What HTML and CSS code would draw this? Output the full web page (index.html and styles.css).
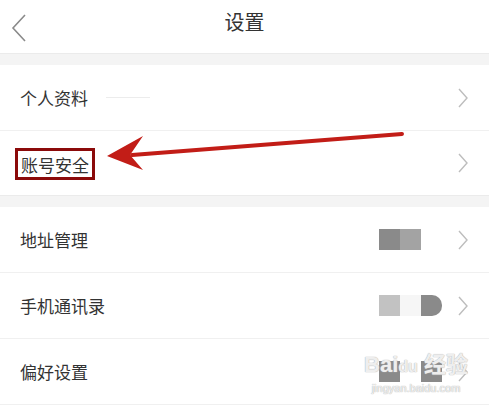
FILE: index.html
```html
<!DOCTYPE html>
<html lang="zh-CN">
<head>
    <meta charset="UTF-8">
    <meta name="viewport" content="width=device-width, initial-scale=1.0">
    <title>设置</title>
    <link rel="stylesheet" href="styles.css">
</head>
<body>

    <div class="page">
        <div class="header">
            <div class="back">
                <svg width="16" height="28" viewBox="0 0 16 28"><polyline points="14,1 2,14 14,27" fill="none" stroke="#8a8a8a" stroke-width="1.6"/></svg>
            </div>
            <div class="title">设置</div>
            <div></div>
        </div>

        <div class="gap"></div>
        <div class="section">
            <div class="row">
                <span class="label">个人资料</span>
                <span class="faint-line"></span>
                <svg class="chev" width="10" height="20" viewBox="0 0 10 20"><polyline points="1,1 9,10 1,19" fill="none" stroke="#bdbdbd" stroke-width="1.4"/></svg>
            </div>
            <div class="row short">
                <span class="label boxed">账号安全</span>
                <svg class="chev" width="10" height="20" viewBox="0 0 10 20"><polyline points="1,1 9,10 1,19" fill="none" stroke="#bdbdbd" stroke-width="1.4"/></svg>
            </div>
        </div>

        <div class="gap"></div>
        <div class="section">
            <div class="row">
                <span class="label">地址管理</span>
                <span class="blocks">
                    <i class="b dark"></i><i class="b mid"></i>
                </span>
                <svg class="chev" width="10" height="20" viewBox="0 0 10 20"><polyline points="1,1 9,10 1,19" fill="none" stroke="#bdbdbd" stroke-width="1.4"/></svg>
            </div>
            <div class="row">
                <span class="label">手机通讯录</span>
                <span class="blocks">
                    <i class="b light"></i><i class="b pale"></i><i class="b dark round"></i>
                </span>
                <svg class="chev" width="10" height="20" viewBox="0 0 10 20"><polyline points="1,1 9,10 1,19" fill="none" stroke="#bdbdbd" stroke-width="1.4"/></svg>
            </div>
            <div class="row last">
                <span class="label">偏好设置</span>
                <span class="blocks">
                    <i class="b dark"></i><i class="b blank"></i><i class="b dark"></i>
                </span>
                <svg class="chev" width="10" height="20" viewBox="0 0 10 20"><polyline points="1,1 9,10 1,19" fill="none" stroke="#bdbdbd" stroke-width="1.4"/></svg>
            </div>
        </div>

        <!-- 红色箭头标注 -->
        <svg class="arrow" width="489" height="409" viewBox="0 0 489 409">
            <line x1="402" y1="134" x2="132" y2="155" stroke="#c21d17" stroke-width="4" stroke-linecap="round"/>
            <polygon points="107,156 143,136 130,155 143,170" fill="#c21d17"/>
        </svg>

        <div class="watermark">
            <div class="wm-logo">Bai<span>du</span> 经验</div>
            <div class="wm-url">jingyan.baidu.com</div>
        </div>
    </div>

</body>
</html>
```

FILE: styles.css
```css
body {
    margin: 0;
    background-color: #fff;
    font-family: "Noto Sans CJK SC", "Noto Sans", sans-serif;
    color: #333;
}
.page {
    position: relative;
    width: 489px;
    height: 409px;
    overflow: hidden;
}
.header {
    display: grid;
    grid-template-columns: 60px 1fr 60px;
    align-items: center;
    height: 53px;
    background-color: #fff;
}
.back {
    display: flex;
    align-items: center;
    padding-left: 11px;
    padding-top: 2px;
}
.title {
    text-align: center;
    font-size: 20px;
    color: #333;
    line-height: 1;
    margin-top: -9px;
}
.gap {
    height: 12px;
    background-color: #f4f4f4;
    border-top: 1px solid #ebebeb;
    box-sizing: border-box;
}
.section {
    background-color: #fff;
}
.row {
    display: flex;
    align-items: center;
    height: 66px;
    padding: 0 21px 0 20px;
    border-bottom: 1px solid #f0f0f0;
    box-sizing: border-box;
}
.row.short {
    height: 64px;
    border-bottom: none;
}
.label {
    font-size: 17px;
    color: #333;
    line-height: 1;
}
.label.boxed {
    margin-left: -5px;
    padding: 5px 3px 4px 3px;
    border: 3px solid #8b0a0a;
    margin-top: 1px;
}
.faint-line {
    width: 44px;
    height: 1px;
    background-color: #ececec;
    margin-left: 18px;
}
.blocks {
    display: flex;
    width: 63px;
    margin-left: auto;
    margin-right: 16px;
}
.b {
    display: block;
    width: 21px;
    height: 21px;
}
.b.dark { background-color: #8a8a8a; }
.b.mid { background-color: #a3a3a3; }
.b.light { background-color: #c2c2c2; }
.b.pale { background-color: #f6f6f6; }
.b.blank { background-color: #fff; }
.b.round { border-radius: 0 10px 10px 0; }
.chev {
    display: block;
    margin-left: auto;
}
.blocks + .chev {
    margin-left: 0;
}
.arrow {
    position: absolute;
    top: 0;
    left: 0;
    pointer-events: none;
}
.watermark {
    position: absolute;
    left: 364px;
    top: 350px;
    width: 104px;
    text-align: center;
    color: rgba(255, 255, 255, 0.8);
    text-shadow: 0 0 1px #b5b5b5, 0 0 1px #b5b5b5;
}
.wm-logo {
    font-family: "Liberation Sans", "Noto Sans CJK SC", sans-serif;
    font-weight: bold;
    font-size: 22px;
    line-height: 30px;
}
.wm-logo span {
    font-size: 16px;
}
.wm-url {
    font-family: "Liberation Sans", sans-serif;
    font-size: 11px;
    line-height: 12px;
}
```
